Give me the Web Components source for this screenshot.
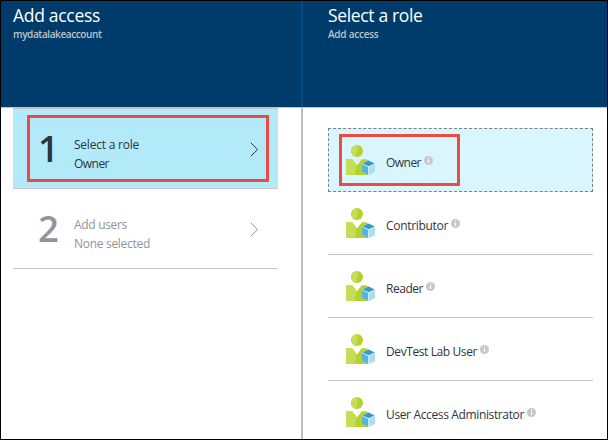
<!DOCTYPE html>
<html lang="en">
<head>
<meta charset="utf-8">
<title>Add access</title>
<style>
html,body{margin:0;width:608px;height:440px;overflow:hidden;background:#fff;font-family:"Open Sans","Noto Sans",sans-serif}
</style>
</head>
<body>
<access-app></access-app>
<script>
const define = (name, html, init) => {
  const template = document.createElement('template');
  template.innerHTML = html;
  customElements.define(name, class extends HTMLElement {
    constructor() {
      super();
      this.attachShadow({mode: 'open'}).append(template.content.cloneNode(true));
    }
    connectedCallback() { if (init) init(this); }
  });
};

// Text label tracked so that its line fills the advance given in "w".
define('fit-text', `<style>
:host{display:block;white-space:nowrap;width:max-content}
span{display:inline-block}
</style><span><slot></slot></span>`, el => {
  const span = el.shadowRoot.querySelector('span');
  const w = +el.getAttribute('w');
  const natural = span.getBoundingClientRect().width;
  span.style.letterSpacing = ((w - natural) / el.textContent.length) + 'px';
});

define('user-icon', `<style>:host{display:block;width:29px;height:30px}svg{display:block}</style>
<svg width="29" height="30" viewBox="0 0 29 30">
<circle cx="11" cy="6.1" r="6" fill="#b5d22c"/>
<path d="M12.4 .3A6 6 0 1 0 10 12.1Z" fill="#c6dd57"/>
<path d="M0 14.2h6.2L11 20.4l4.8-6.2h3.7q2.7 0 2.7 2.7V30H0Z" fill="#b5d22c"/>
<path d="M0 14.2h6.2L10.4 19.7 9 30H0Z" fill="#c6dd57"/>
<path d="M22.6 15.6l6.4 2.9v8.6l-6.4 2.9-6.5-2.9v-8.6Z" fill="#e8f7fb"/>
<path d="M22.6 15.5l6.1 2.9-6.1 2.9-6.1-2.9Z" fill="#3999c6"/>
<path d="M16 19.1l6.2 2.9v8L16 27.1Z" fill="#59b4d9"/>
<path d="M29 19.1l-5.9 2.9v8l5.9-2.9Z" fill="#acdcf0"/>
</svg>`);

define('info-icon', `<style>:host{display:block;width:9px;height:9px}svg{display:block}</style>
<svg width="9" height="9" viewBox="0 0 9 9"><circle cx="4.5" cy="4.5" r="4.5" fill="#c8c8c8"/><path d="M4 1.6h1.1v1.1H4zM3.7 3.7h1.4v3.4H4V4.5h-.3z" fill="#fff"/></svg>`);

define('blade-header', `<style>
:host{display:block;box-sizing:border-box;height:106px;background:#003c6b;padding:2px 0 0 var(--inset)}
.title{color:#fff;font-size:17.5px;line-height:24px}
.sub{color:#bfc3c6;font-size:10px;font-weight:600;line-height:13px;padding-top:1px}
</style><div class="title"><slot name="title"></slot></div><div class="sub"><slot></slot></div>`);

define('step-row', `<style>
:host{display:grid;grid-template-columns:61px 1fr 9px;box-sizing:border-box;height:80px;padding-right:19px;border-bottom:1px solid #c6c6c6;color:#929497;position:relative}
:host([active]){background:#b2eafa;color:#2e343c}
.num{font-size:36.5px;font-weight:600;line-height:48px;padding:15px 0 0 25px}
.copy{font-size:12px;line-height:19px;padding-top:26px}
svg{display:block;margin-top:33px}
.mark{display:none}
:host([active]) .mark{display:block;position:absolute;left:14px;top:6px;width:236px;height:61px;border:3px solid #ec4a43}
</style>
<div class="num"><slot name="num"></slot></div><div class="copy"><slot></slot></div>
<svg width="9" height="15" viewBox="0 0 9 15" fill="none" stroke="currentColor"><path d="M.8.8l6.8 6.7L.8 14.2"/></svg>
<div class="mark"></div>`);

define('role-row', `<style>
:host{display:flex;box-sizing:border-box;height:63px;padding:16px 0 0 18px;border-bottom:1px solid #c6c6c6;color:#30353c;font-size:12px;position:relative}
:host([active]){height:64px;background:#d9f5fd;border:1px dashed #7d828a;padding:16px 0 0 17px}
:host([last]){border-bottom:0;height:59px}
.name{line-height:18px;margin:9px 0 0 11px}
info-icon{margin:11px 0 0 3px}
.mark{display:none}
:host([active]) .mark{display:block;position:absolute;left:10px;top:5px;width:115px;height:46px;border:3px solid #ec4a43}
</style>
<user-icon></user-icon><div class="name"><slot></slot></div><info-icon></info-icon><div class="mark"></div>`);

define('access-app', `<style>
:host{display:grid;grid-template-columns:300px 2px 1fr;box-sizing:border-box;width:608px;height:440px;border:1px solid #000;overflow:hidden}
section{min-width:0;overflow:hidden}
.rule{background:linear-gradient(#004a87 106px,#c0c0c0 106px)}
.line{height:1px;background:#bcc3c9}
.steps{margin:0 23px 0 12px;border-top:1px solid #c6c6c6}
.roles{margin:20px 14px 0 25px}
.left{--inset:12px}.right{--inset:25px}
</style>
<section class="left">
<blade-header><fit-text slot="title" w="87">Add access</fit-text><fit-text w="88.5">mydatalakeaccount</fit-text></blade-header>
<div class="line"></div>
<div class="steps">
<step-row active><span slot="num">1</span><fit-text w="65">Select a role</fit-text><fit-text w="35">Owner</fit-text></step-row>
<step-row><span slot="num">2</span><fit-text w="53">Add users</fit-text><fit-text w="76">None selected</fit-text></step-row>
</div>
</section>
<div class="rule"></div>
<section class="right">
<blade-header><fit-text slot="title" w="94.5">Select a role</fit-text><fit-text w="50.5">Add access</fit-text></blade-header>
<div class="line"></div>
<div class="roles">
<role-row active><fit-text w="35">Owner</fit-text></role-row>
<role-row><fit-text w="62">Contributor</fit-text></role-row>
<role-row><fit-text w="37">Reader</fit-text></role-row>
<role-row><fit-text w="91">DevTest Lab User</fit-text></role-row>
<role-row last><fit-text w="138">User Access Administrator</fit-text></role-row>
</div>
</section>`);
</script>
</body>
</html>
